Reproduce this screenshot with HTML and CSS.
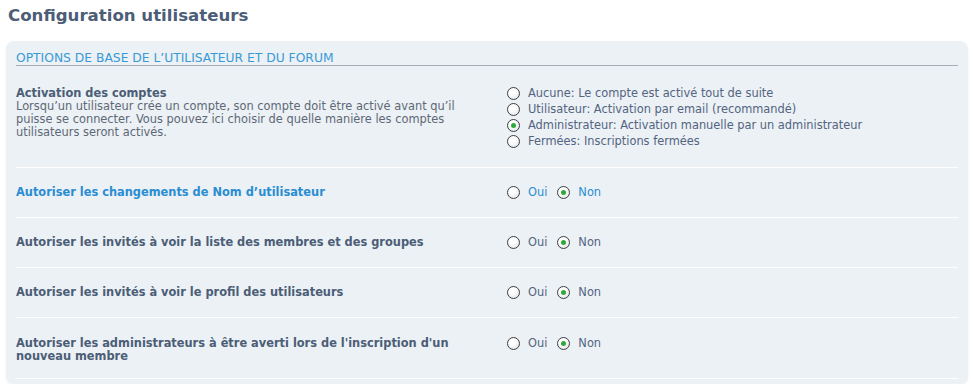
FILE: index.html
```html
<!DOCTYPE html>
<html lang="fr">
<head>
<meta charset="UTF-8">
<title>Configuration utilisateurs</title>
<link rel="stylesheet" href="styles.css">
</head>
<body>

<h1>Configuration utilisateurs</h1>

<!-- OPTIONS PANEL -->
<fieldset class="panel">
    <div class="legend">OPTIONS DE BASE DE L’UTILISATEUR ET DU FORUM</div>

    <div class="row first">
        <div class="label">
            <strong>Activation des comptes</strong>
            <span class="desc">Lorsqu’un utilisateur crée un compte, son compte doit être activé avant qu’il puisse se connecter. Vous pouvez ici choisir de quelle manière les comptes utilisateurs seront activés.</span>
        </div>
        <div class="choices stacked">
            <label><input type="radio" name="act"> Aucune: Le compte est activé tout de suite</label>
            <label><input type="radio" name="act"> Utilisateur: Activation par email (recommandé)</label>
            <label><input type="radio" name="act" checked> Administrateur: Activation manuelle par un administrateur</label>
            <label><input type="radio" name="act"> Fermées: Inscriptions fermées</label>
        </div>
    </div>

    <div class="row active">
        <div class="label"><strong>Autoriser les changements de Nom d’utilisateur</strong></div>
        <div class="choices">
            <label><input type="radio" name="r1"> Oui</label>
            <label><input type="radio" name="r1" checked> Non</label>
        </div>
    </div>

    <div class="row">
        <div class="label"><strong>Autoriser les invités à voir la liste des membres et des groupes</strong></div>
        <div class="choices">
            <label><input type="radio" name="r2"> Oui</label>
            <label><input type="radio" name="r2" checked> Non</label>
        </div>
    </div>

    <div class="row">
        <div class="label"><strong>Autoriser les invités à voir le profil des utilisateurs</strong></div>
        <div class="choices">
            <label><input type="radio" name="r3"> Oui</label>
            <label><input type="radio" name="r3" checked> Non</label>
        </div>
    </div>

    <div class="row last">
        <div class="label"><strong>Autoriser les administrateurs à être averti lors de l'inscription d'un nouveau membre</strong></div>
        <div class="choices">
            <label><input type="radio" name="r4"> Oui</label>
            <label><input type="radio" name="r4" checked> Non</label>
        </div>
    </div>
</fieldset>

</body>
</html>
```

FILE: styles.css
```css
body {
    margin: 0;
    padding: 0 5px 0 6px;
    background: #ffffff;
    color: #536482;
    font-family: "DejaVu Sans", Verdana, sans-serif;
    font-size: 11.4px;
}

h1 {
    margin: 0;
    padding: 5px 0 0 2px;
    font-size: 16.6px;
    line-height: 22px;
    font-weight: bold;
    color: #4c5d77;
}

.panel {
    margin: 14px 0 0 0;
    padding: 10px 10px 5px 10px;
    border: none;
    border-radius: 8px;
    background: #ebf1f4;
    box-shadow: 0 1px 2px rgba(0, 0, 0, 0.08);
}

.legend {
    font-size: 12.3px;
    line-height: 14px;
    color: #3a9ad7;
    border-bottom: 1px solid #a5aeb6;
}

.row {
    display: flex;
    align-items: flex-start;
    padding: 18px 0;
    border-bottom: 1px solid #ffffff;
    line-height: 13px;
}

.row.first {
    padding: 21px 0 19px 0;
}

.row.last {
    padding: 19px 0 15px 0;
}

.label {
    width: 490px;
    flex-shrink: 0;
}

.label strong {
    display: block;
    color: #4c5d77;
    padding-right: 30px;
}

.desc {
    display: block;
    color: #5e6877;
    padding-right: 30px;
}

.active .label strong,
.active .choices label {
    color: #2a8dd2;
}

.choices {
    display: flex;
    gap: 9px;
    color: #536482;
}

.choices.stacked {
    flex-direction: column;
    gap: 3px;
}

.choices label {
    display: flex;
    align-items: center;
    gap: 8px;
}

.choices input {
    appearance: none;
    -webkit-appearance: none;
    margin: 0 0 0 1px;
    width: 13px;
    height: 13px;
    border: 1px solid #3c3f44;
    border-radius: 50%;
    background: radial-gradient(circle at 40% 35%, #ffffff 30%, #dcdcdc 100%);
    position: relative;
    box-sizing: border-box;
}

.choices input:checked::after {
    content: "";
    position: absolute;
    left: 3px;
    top: 3px;
    width: 5px;
    height: 5px;
    border-radius: 50%;
    background: #2fa83a;
}
```
